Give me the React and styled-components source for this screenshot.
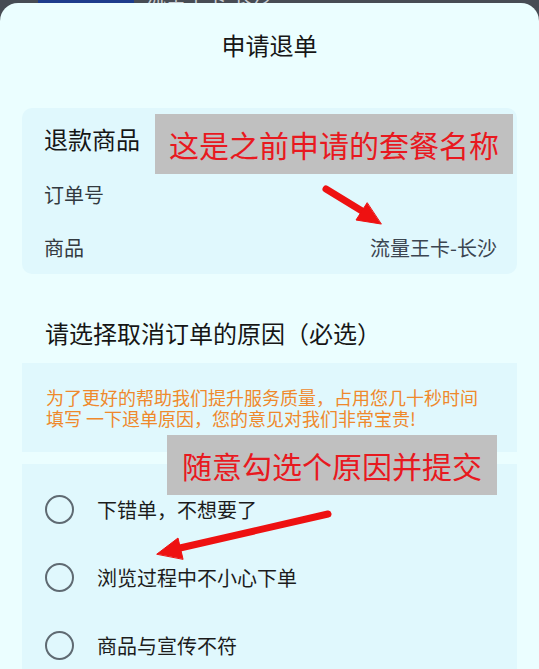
import React from "react";
import styled, { createGlobalStyle } from "styled-components";

const GlobalStyle = createGlobalStyle`
  html, body { margin: 0; padding: 0; background: #474c54; }
  body { font-family: "Noto Sans CJK SC", "Noto Sans", sans-serif; }
  * { box-sizing: border-box; }
`;

const Page = styled.div`
  position: relative;
  width: 539px;
  height: 669px;
  overflow: hidden;
  background: #474c54;
  display: flex;
  flex-direction: column;
`;

const Backdrop = styled.div`
  height: 3px;
  flex: none;
  display: flex;
  align-items: flex-end;
  overflow: hidden;
  padding-left: 38px;
`;

const BackdropBlock = styled.div`
  width: 96px;
  height: 3px;
  flex: none;
  background: #1d3c8c;
`;

const BackdropText = styled.div`
  margin-left: 12px;
  font-size: 20px;
  line-height: 20px;
  height: 20px;
  flex: none;
  color: #c9cdd2;
  transform: translateY(3px);
  white-space: nowrap;
`;

const Sheet = styled.div`
  flex: 1;
  background: #ebfeff;
  border-radius: 18px 18px 0 0;
  padding: 0 22px;
  display: flex;
  flex-direction: column;
`;

const Title = styled.h1`
  margin: 0;
  padding-top: 24px;
  height: 105px;
  font-size: 24px;
  line-height: 36px;
  font-weight: 400;
  color: #161616;
  text-align: center;
`;

const Card = styled.div`
  background: #e0f8fd;
  border-radius: ${(p) => p.$radius ?? 10}px;
  padding: ${(p) => p.$pad || "0 20px 0 22px"};
  margin-top: ${(p) => p.$mt || 0}px;
`;

const CardHeading = styled.div`
  height: 60px;
  display: flex;
  align-items: center;
  font-size: 24px;
  color: #161616;
`;

const InfoRow = styled.div`
  height: 53px;
  display: flex;
  align-items: center;
  justify-content: space-between;
  font-size: 20px;
  color: #333a40;
`;

const InfoValue = styled.span`
  color: #3b4550;
`;

const SectionHeading = styled.div`
  padding: 45px 0 16px 23px;
  font-size: 24px;
  line-height: 28px;
  color: #161616;
`;

const Notice = styled.p`
  margin: 0;
  font-size: 18px;
  line-height: 21px;
  color: #ef892c;
  white-space: pre-wrap;
`;

const Option = styled.label`
  height: 68px;
  display: flex;
  align-items: center;
  gap: 23px;
  font-size: 20px;
  color: #1c1c1c;
`;

const Radio = styled.span`
  width: 29px;
  height: 29px;
  flex: none;
  border-radius: 50%;
  border: 2px solid #5f6a72;
`;

const Annotation = styled.div`
  position: absolute;
  left: ${(p) => p.$x}px;
  top: ${(p) => p.$y}px;
  width: ${(p) => p.$w}px;
  height: ${(p) => p.$h}px;
  background: #c0c0c0;
  color: #e8191f;
  font-size: 30px;
  display: flex;
  align-items: center;
  justify-content: center;
  white-space: nowrap;
`;

const Arrows = styled.svg`
  position: absolute;
  left: 0;
  top: 0;
  pointer-events: none;
`;

const options = ["下错单，不想要了", "浏览过程中不小心下单", "商品与宣传不符"];

export default function App() {
  return (
    <>
      <GlobalStyle />
      <Page>
        <Backdrop>
          <BackdropBlock />
          <BackdropText>流量王卡-长沙</BackdropText>
        </Backdrop>
        <Sheet>
          <Title>申请退单</Title>
          <Card>
            <CardHeading>退款商品</CardHeading>
            <InfoRow>
              <span>订单号</span>
            </InfoRow>
            <InfoRow>
              <span>商品</span>
              <InfoValue>流量王卡-长沙</InfoValue>
            </InfoRow>
          </Card>
          <SectionHeading>请选择取消订单的原因（必选）</SectionHeading>
          <Card $radius={0} $pad="24px 20px 23px 24px">
            <Notice>
              {"为了更好的帮助我们提升服务质量，占用您几十秒时间\n填写 一下退单原因，您的意见对我们非常宝贵!"}
            </Notice>
          </Card>
          <Card $radius={0} $mt={12} $pad="11px 20px 0 23px">
            {options.map((o) => (
              <Option key={o}>
                <Radio />
                {o}
              </Option>
            ))}
          </Card>
        </Sheet>
        <Annotation $x={155} $y={114} $w={358} $h={60}>
          这是之前申请的套餐名称
        </Annotation>
        <Annotation $x={167} $y={435} $w={330} $h={60}>
          随意勾选个原因并提交
        </Annotation>
        <Arrows width="539" height="669" viewBox="0 0 539 669">
          <g fill="#ee1111" stroke="#ee1111" strokeLinecap="round" strokeLinejoin="round">
            <line x1="326" y1="189" x2="362" y2="211" strokeWidth="7" />
            <polygon points="381,224 356,220 367,203" strokeWidth="1" />
            <line x1="328" y1="514" x2="180" y2="548" strokeWidth="7" />
            <polygon points="157,554 178,538 183,559" strokeWidth="1" />
          </g>
        </Arrows>
      </Page>
    </>
  );
}
